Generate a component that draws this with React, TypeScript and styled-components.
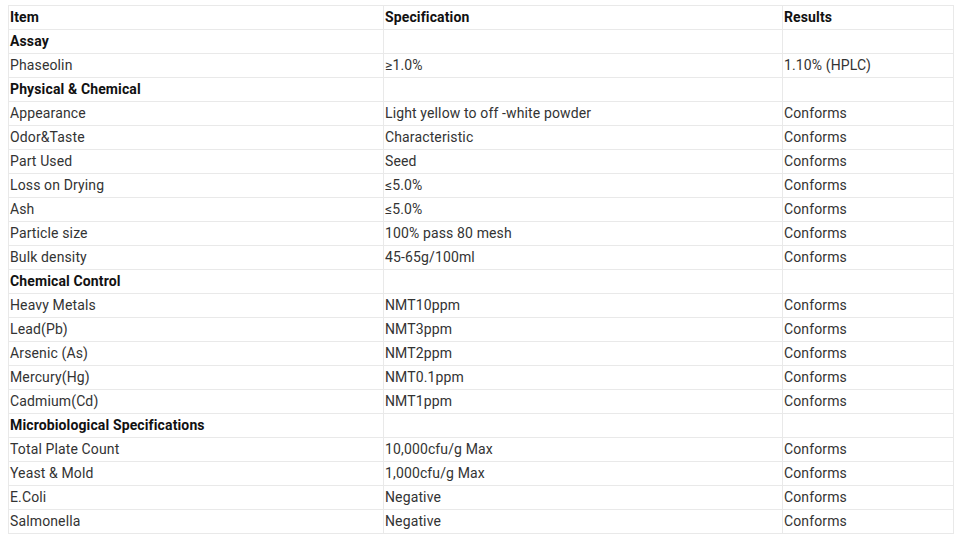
import React from "react";
import styled, { createGlobalStyle } from "styled-components";

const Global = createGlobalStyle`
  html, body { margin: 0; padding: 0; background: #fff; }
  body { font-family: Roboto, "Liberation Sans", Arial, sans-serif; }
`;

const Page = styled.div`
  padding: 5px 0 0 8px;
`;

const Table = styled.table`
  border-collapse: collapse;
  table-layout: fixed;
  width: 945px;
  font-size: 14px;
  letter-spacing: 0.13px;
  color: #333;
`;

const Col = styled.col<{ $w: number }>`
  width: ${(p) => p.$w}px;
`;

const Cell = styled.td<{ $bold?: boolean }>`
  border: 1px solid #e9e9e9;
  height: 24px;
  padding: 0 1px 1px;
  box-sizing: border-box;
  line-height: 22px;
  vertical-align: middle;
  font-weight: ${(p) => (p.$bold ? 700 : 400)};
  color: ${(p) => (p.$bold ? "#111" : "#333")};
  white-space: nowrap;
`;

type Row = [string, string, string, boolean?];

const rows: Row[] = [
  ["Item", "Specification", "Results", true],
  ["Assay", "", "", true],
  ["Phaseolin", "≥1.0%", "1.10% (HPLC)"],
  ["Physical & Chemical", "", "", true],
  ["Appearance", "Light yellow to off -white powder", "Conforms"],
  ["Odor&Taste", "Characteristic", "Conforms"],
  ["Part Used", "Seed", "Conforms"],
  ["Loss on Drying", "≤5.0%", "Conforms"],
  ["Ash", "≤5.0%", "Conforms"],
  ["Particle size", "100% pass 80 mesh", "Conforms"],
  ["Bulk density", "45-65g/100ml", "Conforms"],
  ["Chemical Control", "", "", true],
  ["Heavy Metals", "NMT10ppm", "Conforms"],
  ["Lead(Pb)", "NMT3ppm", "Conforms"],
  ["Arsenic (As)", "NMT2ppm", "Conforms"],
  ["Mercury(Hg)", "NMT0.1ppm", "Conforms"],
  ["Cadmium(Cd)", "NMT1ppm", "Conforms"],
  ["Microbiological Specifications", "", "", true],
  ["Total Plate Count", "10,000cfu/g Max", "Conforms"],
  ["Yeast & Mold", "1,000cfu/g Max", "Conforms"],
  ["E.Coli", "Negative", "Conforms"],
  ["Salmonella", "Negative", "Conforms"],
];

export default function App() {
  return (
    <Page>
      <Global />
      <Table>
        <colgroup>
          <Col $w={375} />
          <Col $w={399} />
          <Col $w={171} />
        </colgroup>
        <tbody>
          {rows.map(([a, b, c, bold], i) => (
            <tr key={i}>
              <Cell $bold={bold}>{a}</Cell>
              <Cell $bold={bold}>{b}</Cell>
              <Cell $bold={bold}>{c}</Cell>
            </tr>
          ))}
        </tbody>
      </Table>
    </Page>
  );
}
